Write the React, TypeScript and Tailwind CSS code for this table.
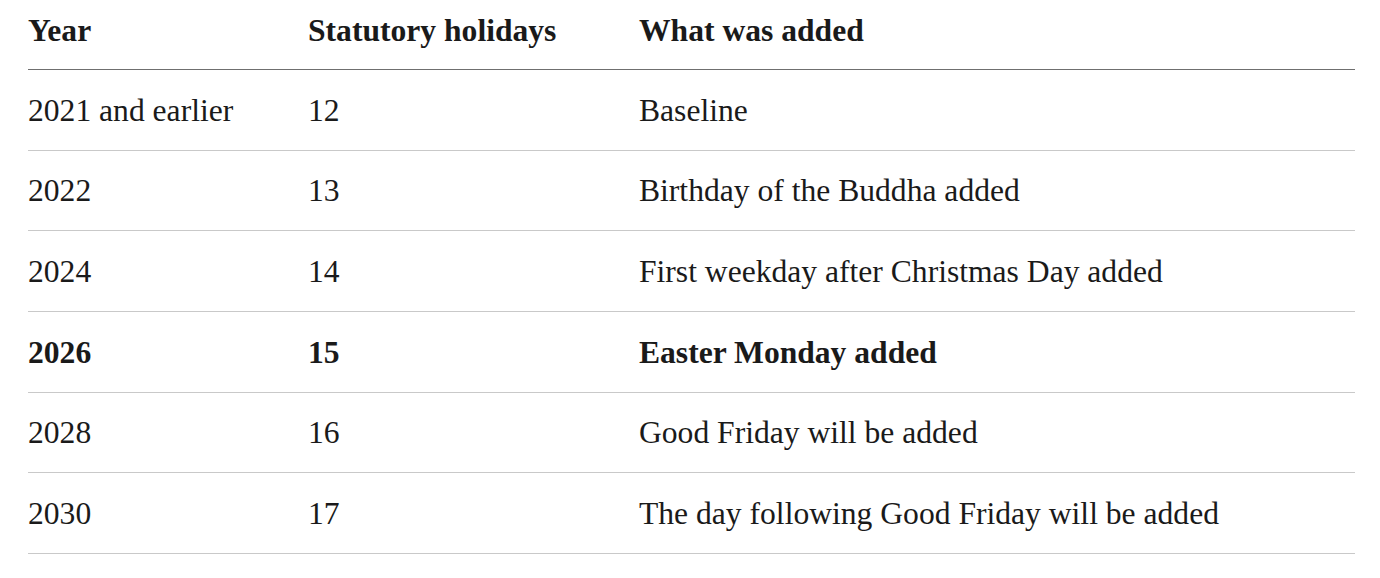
import React from 'react';

const rows = [
  { year: '2021 and earlier', count: 12, note: 'Baseline' },
  { year: '2022', count: 13, note: 'Birthday of the Buddha added' },
  { year: '2024', count: 14, note: 'First weekday after Christmas Day added' },
  { year: '2026', count: 15, note: 'Easter Monday added', current: true },
  { year: '2028', count: 16, note: 'Good Friday will be added' },
  { year: '2030', count: 17, note: 'The day following Good Friday will be added' },
];

const App: React.FC = () => {
  return (
    <div className="min-h-[578px] bg-white pl-[28px] text-[#1a1a1a] font-['Liberation_Serif',serif]">
      <table className="w-[1327px] border-collapse text-left text-[31.6px] leading-[30px]">
        <thead>
          <tr className="border-b border-[#6f6f6f]">
            <th className="w-[280px] p-0 pt-[16px] pb-[23px] font-bold">Year</th>
            <th className="w-[331px] p-0 pt-[16px] pb-[23px] font-bold">Statutory holidays</th>
            <th className="p-0 pt-[16px] pb-[23px] font-bold">What was added</th>
          </tr>
        </thead>
        <tbody>
          {rows.map((row) => (
            <tr key={row.year} className={`border-b border-[#c9c9c9] ${row.current ? 'font-bold' : 'font-normal'}`}>
              <td className="p-0 pt-[25.83px] pb-[23.83px]">{row.year}</td>
              <td className="p-0 pt-[25.83px] pb-[23.83px]">{row.count}</td>
              <td className="p-0 pt-[25.83px] pb-[23.83px]">{row.note}</td>
            </tr>
          ))}
        </tbody>
      </table>
    </div>
  );
};

export default App;
